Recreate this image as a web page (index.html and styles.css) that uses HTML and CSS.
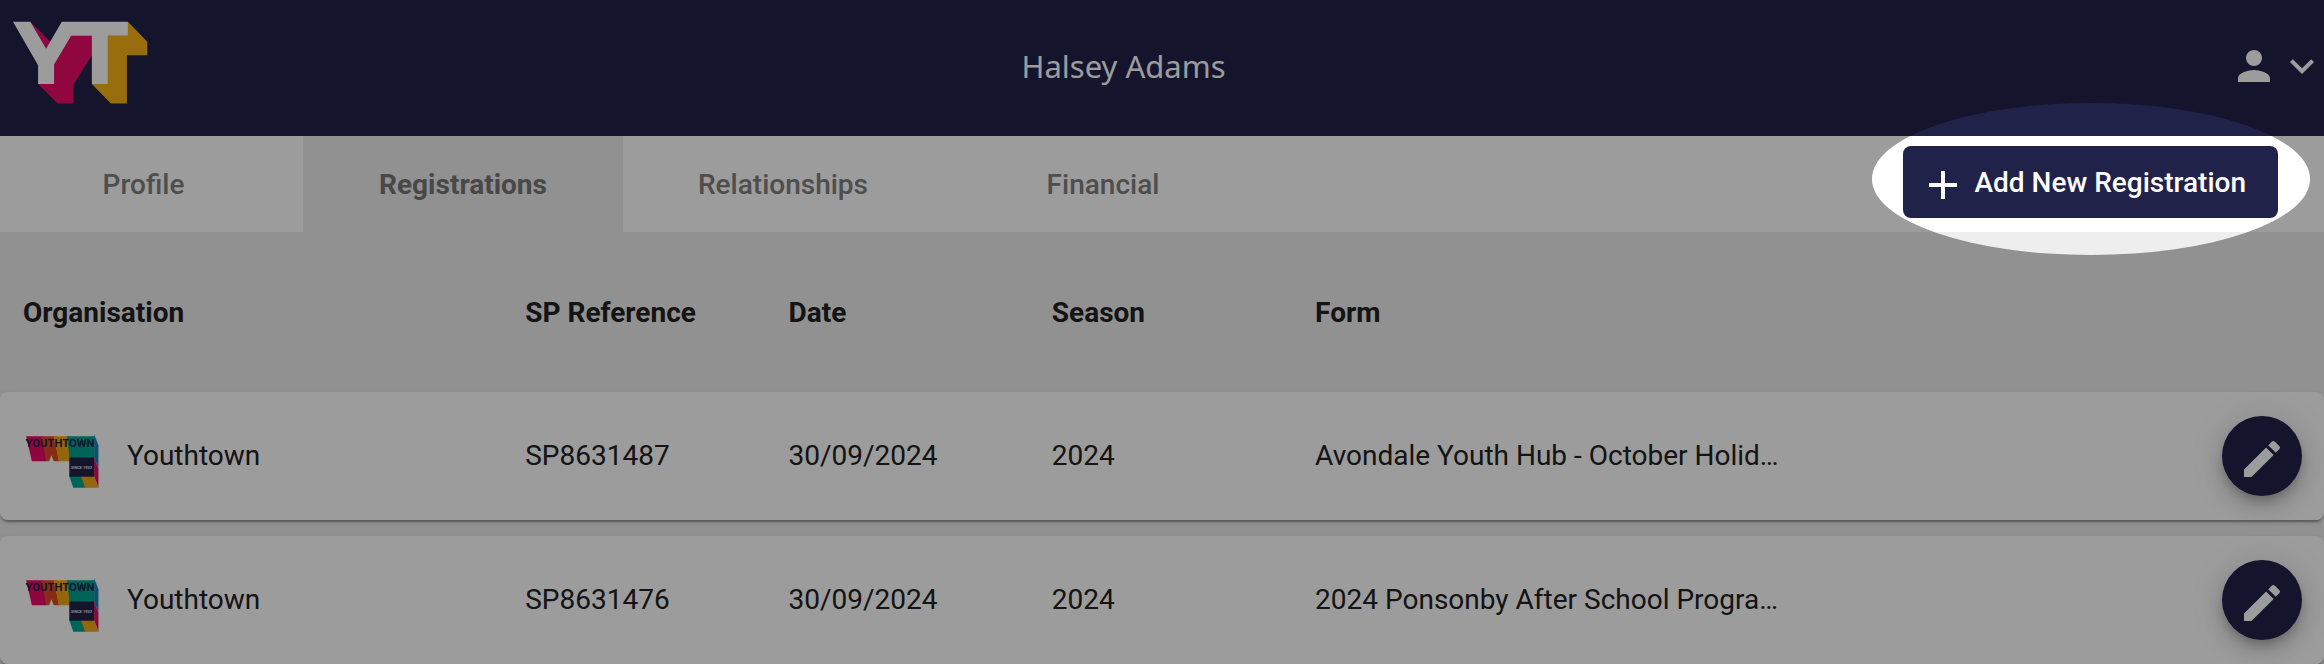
FILE: index.html
```html
<!DOCTYPE html>
<html lang="en">
<head>
<meta charset="utf-8">
<title>Registrations</title>
<link rel="stylesheet" href="styles.css">
</head>
<body>
<svg class="symbols" aria-hidden="true">
  <symbol id="edit" viewBox="0 0 24 24"><path d="M3 17.25V21h3.75L17.81 9.94l-3.75-3.75L3 17.25zM20.71 7.04a1 1 0 0 0 0-1.41l-2.34-2.34a1 1 0 0 0-1.41 0l-1.83 1.83 3.75 3.75 1.83-1.83z"/></symbol>
  <symbol id="youthtown" viewBox="30 38 222 166">
    <path fill="#ea0b68" d="M33 48 50 123H94L84 48z"/>
    <path fill="#dd4a26" d="M78 48 94 123h8l7-18 7 18h16L118 48z"/>
    <path fill="#f2a613" d="M115 48 132 123h38L160 48z"/>
    <path fill="#00a390" d="M156 48 164 114h74V48z"/>
    <path fill="#1585bd" d="M238 42 251 75v72L238 112z"/>
    <path fill="#ea0b68" d="M238 112 251 147v56L238 170z"/>
    <path fill="#00a390" d="M163 168 175 203h37L200 168z"/>
    <path fill="#f2a613" d="M198 168 211 203h40L238 168z"/>
    <path fill="#21224a" d="M163 112h75v58h-75z"/>
    <text class="mark-name" x="135" y="80" text-anchor="middle">YOUTHTOWN</text>
    <text class="mark-since" x="200" y="146" text-anchor="middle">SINCE 1932</text>
  </symbol>
</svg>
<div class="page">
  <header class="topbar">
    <a class="logo" href="#" aria-label="Home">
      <svg width="135" height="83" viewBox="40 62 404 248" aria-hidden="true">
        <path fill="#eb0a68" d="M92 64 152 124 139 147zM213 106H277V163L221 252V309H173L115 250H163V192z"/>
        <path fill="#f8b218" d="M384 64 442 124V164H381V309H333L276 250H324V106H384z"/>
        <path fill="#fff" d="M40 64H92L139 145 186 64H384V106H324V250H276V106H214L163 192V250H115V194z"/>
      </svg>
    </a>
    <h1 class="title">Halsey Adams</h1>
    <button class="account" type="button" aria-label="Account menu">
      <svg width="32" height="48" viewBox="4 0 16 24" aria-hidden="true"><path d="M12 12a4 4 0 1 0 0-8 4 4 0 0 0 0 8zm0 2c-2.670 0-8 1.340-8 4v2h16v-2c0-2.660-5.330-4-8-4z"/></svg>
      <svg width="24" height="48" viewBox="6 0 12 24" aria-hidden="true"><path d="M7.410 8.590 12 13.170l4.590-4.580L18 10l-6 6-6-6z"/></svg>
    </button>
  </header>
  <nav class="tabs">
    <button class="tab" type="button">Profile</button>
    <button class="tab tab-active" type="button">Registrations</button>
    <button class="tab" type="button">Relationships</button>
    <button class="tab" type="button">Financial</button>
    <div class="action">
      <button class="add" type="button">
        <svg width="48" height="48" viewBox="0 0 24 24" aria-hidden="true"><path d="M19 13h-6v6h-2v-6H5v-2h6V5h2v6h6z"/></svg>
        Add New Registration
      </button>
      <div class="spotlight"></div>
    </div>
  </nav>
  <main>
    <table class="list">
      <colgroup><col class="c-org"><col class="c-std"><col class="c-std"><col class="c-std"><col class="c-form"><col></colgroup>
      <thead>
        <tr><th>Organisation</th><th>SP Reference</th><th>Date</th><th>Season</th><th>Form</th><td></td></tr>
      </thead>
      <tbody>
        <tr>
          <td><div class="org"><svg class="org-logo" width="74" height="55" aria-hidden="true"><use href="#youthtown"/></svg>Youthtown</div></td>
          <td>SP8631487</td><td>30/09/2024</td><td>2024</td><td>Avondale Youth Hub - October Holid…</td>
          <td class="cell-edit"><button class="edit" type="button" aria-label="Edit SP8631487"><svg width="48" height="48" aria-hidden="true"><use href="#edit"/></svg></button></td>
        </tr>
        <tr>
          <td><div class="org"><svg class="org-logo" width="74" height="55" aria-hidden="true"><use href="#youthtown"/></svg>Youthtown</div></td>
          <td>SP8631476</td><td>30/09/2024</td><td>2024</td><td>2024 Ponsonby After School Progra…</td>
          <td class="cell-edit"><button class="edit" type="button" aria-label="Edit SP8631476"><svg width="48" height="48" aria-hidden="true"><use href="#edit"/></svg></button></td>
        </tr>
      </tbody>
    </table>
  </main>
</div>
</body>
</html>
```
FILE: styles.css
```css
* { box-sizing: border-box; }

body {
  margin: 0;
  background: #eee;
  color: #212121;
  font: 28px/32px Roboto, "Liberation Sans", sans-serif;
}

button {
  border: 0;
  padding: 0;
  font: inherit;
  cursor: pointer;
}

svg { display: block; fill: currentColor; flex: none; }

.symbols { position: absolute; width: 0; height: 0; }

.page { min-height: 100vh; overflow: hidden; }

.topbar {
  display: grid;
  grid-template-columns: 135px 1fr 215px;
  align-items: center;
  height: 136px;
  padding: 0 10px 0 13px;
  background: #21224a;
  color: #fff;
}

.logo { padding-bottom: 12px; }

.title {
  margin: 0;
  padding-bottom: 4px;
  font: 400 31px/40px "Noto Sans", "Open Sans", sans-serif;
  text-align: center;
}

.account {
  display: flex;
  gap: 20px;
  justify-self: end;
  padding-bottom: 4px;
  background: none;
  color: #fff;
}

.tabs {
  display: flex;
  height: 96px;
  background: #fff;
}

.tab {
  width: 320px;
  padding-top: 2px;
  background: none;
  color: #808080;
  font-weight: 500;
}

.tab:first-child { width: 303px; padding-right: 16px; }

.tab-active { background: #eee; color: #777; font-weight: 700; }

.action {
  position: relative;
  align-self: flex-start;
  margin: 10px 46px 0 auto;
}

.add {
  display: flex;
  align-items: center;
  gap: 8px;
  height: 72px;
  padding: 2px 32px 0 16px;
  border-radius: 8px;
  background: #21224a;
  color: #fff;
  font-weight: 500;
}

.add svg { margin-top: 4px; }

/* Dims everything outside the ellipse around the button */
.spotlight {
  position: absolute;
  z-index: 1;
  inset: -43px -32px -37px -31px;
  border-radius: 50%;
  box-shadow: 0 0 0 3000px rgba(0, 0, 0, 0.39);
  pointer-events: none;
}

.list {
  width: 100%;
  margin-bottom: -16px;
  table-layout: fixed;
  border-collapse: separate;
  border-spacing: 0 16px;
}

.c-org { width: 22.6%; }
.c-std { width: 11.33%; }
.c-form { width: 22%; }

.list th, .list td {
  height: 128px;
  padding: 0;
  text-align: left;
  white-space: nowrap;
}

.list th { padding-top: 2px; font-weight: 700; }

.list th:first-child { padding-left: 23px; }

.list td:first-child { padding-left: 25px; }

.list tbody tr {
  border-radius: 8px;
  box-shadow: 0 4px 2px -2px rgba(0, 0, 0, 0.2), 0 2px 2px rgba(0, 0, 0, 0.14), 0 2px 6px rgba(0, 0, 0, 0.12);
}

.list tbody td { background: #fff; }

.list tbody td:first-child { border-radius: 8px 0 0 8px; }

.list tbody td:last-child { border-radius: 0 8px 8px 0; }

.org { display: flex; align-items: center; gap: 28px; }

.org-logo { margin-top: 8px; }

.mark-name {
  fill: #21224a;
  font: 700 34px "Liberation Sans Narrow", Roboto, sans-serif;
}

.mark-since {
  fill: #fff;
  font: 500 12px "Liberation Sans Narrow", Roboto, sans-serif;
}

.list .cell-edit { padding-right: 22px; }

.edit {
  display: grid;
  place-items: center;
  width: 80px;
  height: 80px;
  margin-left: auto;
  padding-top: 6px;
  border-radius: 50%;
  background: #21224a;
  color: #fff;
  box-shadow: 0 6px 10px -2px rgba(0, 0, 0, 0.2), 0 12px 20px rgba(0, 0, 0, 0.14), 0 2px 36px rgba(0, 0, 0, 0.12);
}
```
